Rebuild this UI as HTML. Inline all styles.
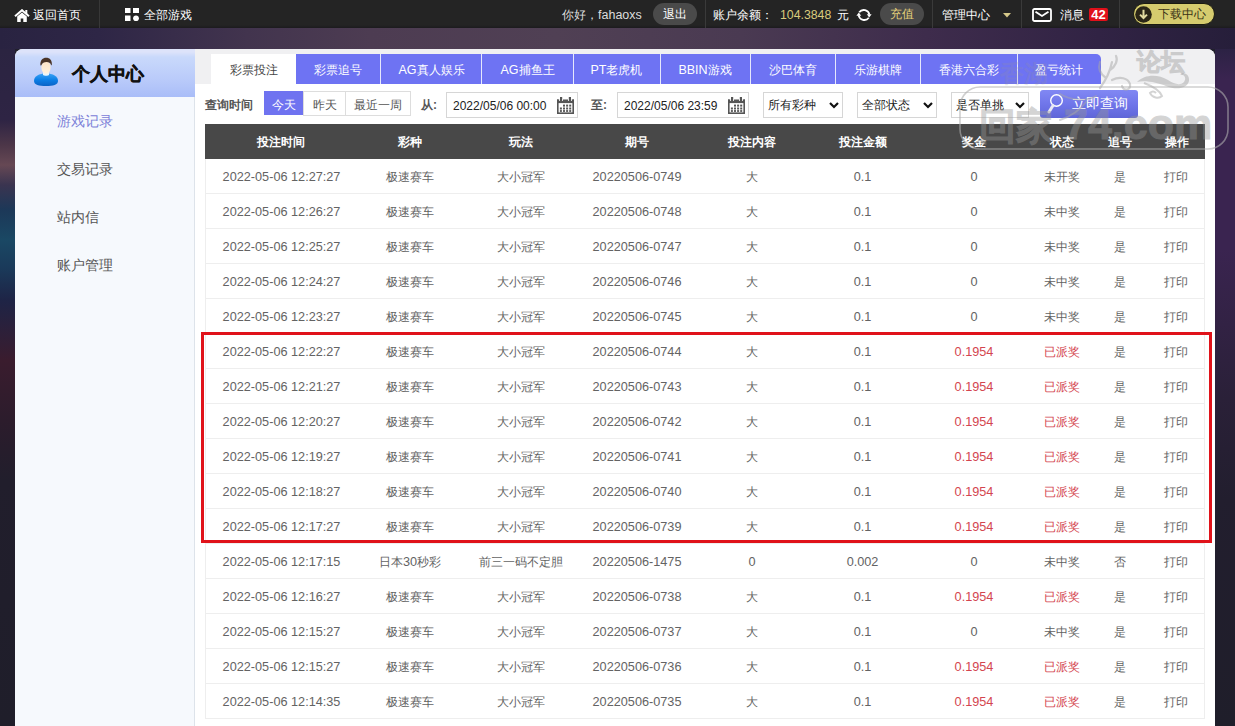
<!DOCTYPE html>
<html><head><meta charset="utf-8">
<style>
*{margin:0;padding:0;box-sizing:border-box}
html,body{width:1235px;height:726px;overflow:hidden}
body{font-family:"Liberation Sans",sans-serif;position:relative;background:#21202c}
.a{position:absolute}
svg{position:absolute;display:block}
.bgt{left:0;top:28px;width:1235px;height:21px;background:linear-gradient(90deg,#292341 0%,#2e2646 8%,#42344e 20%,#4d3c52 30%,#504054 45%,#4a3a52 60%,#3e2c4c 75%,#312344 89%,#261e3a 100%)}
.bgl{left:0;top:49px;width:15px;height:677px;background:linear-gradient(180deg,#2b2441 0px,#2e2444 71px,#4c3648 96px,#664854 116px,#3a3450 136px,#1c3858 161px,#1a4864 191px,#1a3a5a 219px,#1e2446 251px,#3a1c2e 311px,#2c1c2c 371px,#211e2c 431px,#1f1e2a 677px)}
.bgr{left:1215px;top:49px;width:20px;height:677px;background:linear-gradient(180deg,#2c2244 0px,#3a2450 30px,#3a2450 200px,#2a2038 350px,#221e2e 450px,#1f1e2a 677px)}
.top{left:0;top:0;width:1235px;height:28px;background:linear-gradient(180deg,#242424 0px,#242424 25px,#1c1b1e 28px);color:#fff;font-size:12px}
.t{position:absolute;top:1px;height:28px;line-height:28px;white-space:nowrap}
.sep{position:absolute;top:0;width:1px;height:28px;background:#3a3a3a}
.pill{position:absolute;top:3px;height:22px;border-radius:11px;background:#4a4a4a;text-align:center;line-height:22px;white-space:nowrap}
.panel{left:15px;top:49px;width:1200px;height:700px;background:#fff;border-radius:8px 8px 0 0}
.side{left:15px;top:97px;width:180px;height:629px;background:#f6f9fd;border-right:1px solid #dde3ea}
.sidehd{left:15px;top:49px;width:180px;height:48px;border-radius:8px 0 0 0;background:linear-gradient(180deg,#dde3fa 0px,#dde3fa 3px,#c9d9fb 8px,#bacbfa 30px,#a9bdf8 48px)}
.tt{left:72px;top:61px;font-size:18px;line-height:26px;font-weight:bold;color:#111;white-space:nowrap;-webkit-text-stroke:0.4px #111}
.menu{position:absolute;left:57px;font-size:14px;line-height:16px;color:#555;white-space:nowrap}
.tabs{left:195px;top:49px;width:1020px;height:35px;background:#f0f0f2;border-radius:0 8px 0 0}
.tab{position:absolute;top:54px;height:30px;line-height:30px;padding-top:1px;text-align:center;font-size:12px;color:#fff;background:#6e73f3;white-space:nowrap}
.tab.on{background:#fff;color:#444}
.tsep{position:absolute;top:54px;width:1px;height:30px;background:#e6e8fc}
.flt{position:absolute;font-size:12px;line-height:14px;color:#333;white-space:nowrap}
.btn3{position:absolute;top:91px;height:25px;line-height:23px;padding-top:2px;border:1px solid #ddd;text-align:center;font-size:12px;color:#555;background:#fff;white-space:nowrap}
.inp{position:absolute;top:92px;height:26px;border:1px solid #d6d6d6;background:#fff;font-size:12px;color:#222;line-height:24px;padding-left:6px;padding-top:1px;white-space:nowrap}
.sel{position:absolute;top:92px;width:80px;height:26px;border:1px solid #d6d6d6;background:#fff;font-size:12px;color:#222;line-height:24px;padding-left:4px;white-space:nowrap}
table{position:absolute;left:205px;top:124px;width:1000px;border-collapse:separate;border-spacing:0;font-size:12.2px;color:#636363;table-layout:fixed}
th{background:#484848;color:#fff;height:35px;padding-top:2px;font-weight:bold;font-size:12px}
td{height:35px;padding-top:2px;text-align:center;border-bottom:1px solid #eee;white-space:nowrap}
tbody tr td:first-child{border-left:1px solid #eee}
tbody tr td:last-child{border-right:1px solid #eee}
td.r{color:#d4454f}
.n{font-size:12.7px}
.redbox{position:absolute;left:201px;top:332px;width:1011px;height:211px;border:3px solid #e0121a}
</style></head><body>
<div class="a bgt"></div><div class="a bgl"></div><div class="a bgr"></div>
<div class="a top">
  <svg style="left:14px;top:8.5px" width="16" height="14" viewBox="0 0 16 14"><path d="M1 7.2 L8 1.2 L15 7.2" fill="none" stroke="#fff" stroke-width="2"/><rect x="11.3" y="1" width="2" height="4" fill="#fff"/><path d="M3.2 7.5 L8 3.4 L12.8 7.5 V13 H9.3 V9.6 H6.7 V13 H3.2 Z" fill="#fff"/></svg>
  <div class="t" style="left:33px">返回首页</div>
  <div class="sep" style="left:99px;background:#383838"></div>
  <svg style="left:125px;top:8px" width="14" height="13" viewBox="0 0 14 13"><rect x="0" y="0" width="5.5" height="5" fill="#fff"/><rect x="8" y="0" width="6" height="5" fill="#fff"/><rect x="0" y="7.5" width="5.5" height="5.5" fill="#fff"/><circle cx="11" cy="10.3" r="2.9" fill="#fff"/></svg>
  <div class="t" style="left:144px">全部游戏</div>
  <div class="t" style="left:562px;color:#ddd">你好，<span style="font-size:12.5px">fahaoxs</span></div>
  <div class="pill" style="left:653px;width:44px;color:#fff">退出</div>
  <div class="sep" style="left:705px"></div>
  <div class="t" style="left:713px">账户余额：</div>
  <div class="t" style="left:780px;color:#d9cb7c;font-size:12.3px">104.3848</div>
  <div class="t" style="left:837px">元</div>
  <svg style="left:856px;top:8px" width="16" height="14" viewBox="0 0 16 14"><path d="M3.2 4.2 A5.8 5.8 0 0 1 13.4 6.6" fill="none" stroke="#fff" stroke-width="1.8"/><path d="M10.8 6.2 L15.6 6.2 L13.2 9.6 Z" fill="#fff"/><path d="M12.8 9.8 A5.8 5.8 0 0 1 2.6 7.4" fill="none" stroke="#fff" stroke-width="1.8"/><path d="M0.4 7.8 L5.2 7.8 L2.8 4.4 Z" fill="#fff"/></svg>
  <div class="pill" style="left:880px;width:44px;color:#e6d27a">充值</div>
  <div class="sep" style="left:932px"></div>
  <div class="t" style="left:942px">管理中心</div>
  <svg style="left:1003px;top:13px" width="8" height="5" viewBox="0 0 8 5"><path d="M0 0 H8 L4 4.5 Z" fill="#d6c98a"/></svg>
  <div class="sep" style="left:1021px"></div>
  <svg style="left:1032px;top:8px" width="20" height="14" viewBox="0 0 20 14"><rect x="1" y="1" width="18" height="12" rx="1.5" fill="none" stroke="#fff" stroke-width="1.8"/><path d="M3.5 3.8 L10 8 L16.5 3.8" fill="none" stroke="#fff" stroke-width="1.8"/></svg>
  <div class="t" style="left:1060px">消息</div>
  <div class="a" style="left:1089px;top:8px;width:19px;height:13px;background:#e0101a;color:#fff;font-size:13px;font-weight:bold;line-height:13px;text-align:center;border-radius:2px">42</div>
  <div class="sep" style="left:1119px"></div>
  <div class="pill" style="left:1133px;width:82px;background:#d5cb6e;color:#3a3216;padding-left:15px;border:1px solid #1a1a10;line-height:21px">下载中心</div>
  <svg style="left:1135px;top:6px" width="17" height="17" viewBox="0 0 17 17"><circle cx="8.5" cy="8.5" r="8.3" fill="#2b2617"/><path d="M8.5 3.8 V11.5 M5 8.6 L8.5 12 L12 8.6" fill="none" stroke="#e3dba0" stroke-width="2"/></svg>
</div>
<div class="a panel"></div>
<div class="a sidehd"></div>
<svg style="left:33px;top:57px" width="26" height="30" viewBox="0 0 26 30">
  <defs><linearGradient id="bd" x1="0" y1="0" x2="0" y2="1"><stop offset="0" stop-color="#3aa2f5"/><stop offset="0.5" stop-color="#0c7fe6"/><stop offset="1" stop-color="#0a63c6"/></linearGradient>
  <linearGradient id="fc" x1="0" y1="0" x2="0" y2="1"><stop offset="0" stop-color="#fde3c4"/><stop offset="1" stop-color="#fff2de"/></linearGradient></defs>
  <path d="M1 24 C1 19 6 16.5 13 16.5 C20 16.5 25 19 25 24 C25 28 20 29 13 29 C6 29 1 28 1 24 Z" fill="url(#bd)"/>
  <path d="M10 14 H16 V18 C15 19 11 19 10 18 Z" fill="#e8f4fb"/>
  <ellipse cx="13" cy="10.5" rx="4.6" ry="6.3" fill="url(#fc)"/>
  <path d="M7.4 8.6 C7 3 10 0.8 13 0.8 C17 0.8 19.4 3.4 18.8 8.6 L18 7.8 C17.4 5.8 16 5.2 13.6 5 C11 5 9.2 6.2 8.4 8.2 Z" fill="#4a3426"/>
</svg>
<div class="a tt">个人中心</div>
<div class="a side"></div>
<div class="menu" style="top:113px;color:#7b80d8">游戏记录</div>
<div class="menu" style="top:161px">交易记录</div>
<div class="menu" style="top:209px">站内信</div>
<div class="menu" style="top:257px">账户管理</div>
<div class="a tabs"></div>
<div class="tab on" style="left:211px;width:85px">彩票投注</div>
<div class="tab" style="left:296px;width:805px;border-radius:0 5px 0 0"></div>
<div class="tab" style="left:296px;width:84px;background:none">彩票追号</div>
<div class="tab" style="left:381px;width:101px;background:none"><span class="n" style="font-size:12.5px">AG</span>真人娱乐</div>
<div class="tab" style="left:482px;width:91px;background:none"><span class="n" style="font-size:12.5px">AG</span>捕鱼王</div>
<div class="tab" style="left:573px;width:87px;background:none"><span class="n" style="font-size:12.5px">PT</span>老虎机</div>
<div class="tab" style="left:660px;width:90px;background:none"><span class="n" style="font-size:12.5px">BBIN</span>游戏</div>
<div class="tab" style="left:750px;width:85px;background:none">沙巴体育</div>
<div class="tab" style="left:835px;width:85px;background:none">乐游棋牌</div>
<div class="tab" style="left:920px;width:97px;background:none">香港六合彩</div>
<div class="tab" style="left:1017px;width:84px;background:none">盈亏统计</div>
<div class="tsep" style="left:380px"></div>
<div class="tsep" style="left:481px"></div>
<div class="tsep" style="left:573px"></div>
<div class="tsep" style="left:660px"></div>
<div class="tsep" style="left:750px"></div>
<div class="tsep" style="left:835px"></div>
<div class="tsep" style="left:920px"></div>
<div class="tsep" style="left:1017px"></div>

<div class="flt" style="left:205px;top:98px;font-weight:bold;color:#555">查询时间</div>
<div class="btn3" style="left:264px;width:40px;height:24px;background:#6f73f0;color:#fff;border-color:#6f73f0">今天</div>
<div class="btn3" style="left:303px;width:43px">昨天</div>
<div class="btn3" style="left:345px;width:66px">最近一周</div>
<div class="flt" style="left:421px;top:98px;font-weight:bold;color:#555">从:</div>
<div class="inp" style="left:446px;width:132px">2022/05/06 00:00</div>
<svg style="left:557px;top:97px" width="17" height="17" viewBox="0 0 17 17"><g fill="#555"><rect x="0" y="2.5" width="17" height="3.6"/><rect x="0" y="2.5" width="1.6" height="14.5"/><rect x="15.4" y="2.5" width="1.6" height="14.5"/><rect x="0" y="15.4" width="17" height="1.6"/><rect x="3" y="0" width="2.2" height="4"/><rect x="11.8" y="0" width="2.2" height="4"/>
<rect x="6" y="7.6" width="2" height="2"/><rect x="9.1" y="7.6" width="2" height="2"/><rect x="12.2" y="7.6" width="2" height="2"/>
<rect x="2.9" y="10.5" width="2" height="2"/><rect x="6" y="10.5" width="2" height="2"/><rect x="9.1" y="10.5" width="2" height="2"/><rect x="12.2" y="10.5" width="2" height="2"/>
<rect x="2.9" y="13.1" width="2" height="1.8"/><rect x="6" y="13.1" width="2" height="1.8"/><rect x="9.1" y="13.1" width="2" height="1.8"/><rect x="12.2" y="13.1" width="2" height="1.8"/></g><rect x="2.2" y="2" width="0.8" height="2" fill="#fff"/><rect x="5.2" y="2" width="0.8" height="2" fill="#fff"/><rect x="11" y="2" width="0.8" height="2" fill="#fff"/><rect x="14" y="2" width="0.8" height="2" fill="#fff"/></svg>
<div class="flt" style="left:591px;top:98px;font-weight:bold;color:#555">至:</div>
<div class="inp" style="left:617px;width:132px">2022/05/06 23:59</div>
<svg style="left:728px;top:97px" width="17" height="17" viewBox="0 0 17 17"><g fill="#555"><rect x="0" y="2.5" width="17" height="3.6"/><rect x="0" y="2.5" width="1.6" height="14.5"/><rect x="15.4" y="2.5" width="1.6" height="14.5"/><rect x="0" y="15.4" width="17" height="1.6"/><rect x="3" y="0" width="2.2" height="4"/><rect x="11.8" y="0" width="2.2" height="4"/>
<rect x="6" y="7.6" width="2" height="2"/><rect x="9.1" y="7.6" width="2" height="2"/><rect x="12.2" y="7.6" width="2" height="2"/>
<rect x="2.9" y="10.5" width="2" height="2"/><rect x="6" y="10.5" width="2" height="2"/><rect x="9.1" y="10.5" width="2" height="2"/><rect x="12.2" y="10.5" width="2" height="2"/>
<rect x="2.9" y="13.1" width="2" height="1.8"/><rect x="6" y="13.1" width="2" height="1.8"/><rect x="9.1" y="13.1" width="2" height="1.8"/><rect x="12.2" y="13.1" width="2" height="1.8"/></g><rect x="2.2" y="2" width="0.8" height="2" fill="#fff"/><rect x="5.2" y="2" width="0.8" height="2" fill="#fff"/><rect x="11" y="2" width="0.8" height="2" fill="#fff"/><rect x="14" y="2" width="0.8" height="2" fill="#fff"/></svg>
<div class="sel" style="left:763px">所有彩种</div>
<div class="sel" style="left:857px">全部状态</div>
<div class="sel" style="left:951px;width:78px">是否单挑</div>
<svg style="left:829px;top:102px" width="10" height="7" viewBox="0 0 10 7"><path d="M1 1 L5 5 L9 1" fill="none" stroke="#111" stroke-width="2.2"/></svg>
<svg style="left:923px;top:102px" width="10" height="7" viewBox="0 0 10 7"><path d="M1 1 L5 5 L9 1" fill="none" stroke="#111" stroke-width="2.2"/></svg>
<svg style="left:1015px;top:102px" width="10" height="7" viewBox="0 0 10 7"><path d="M1 1 L5 5 L9 1" fill="none" stroke="#111" stroke-width="2.2"/></svg>
<div class="a" style="left:1040px;top:90px;width:98px;height:28px;border-radius:3px;background:linear-gradient(180deg,#8188f3 0%,#7076ea 50%,#5f66d8 100%);color:#fff;font-size:13.5px;line-height:28px;padding-left:32px;white-space:nowrap">立即查询</div>
<svg style="left:1046px;top:93px" width="20" height="22" viewBox="0 0 20 22"><circle cx="10.5" cy="7.5" r="5.8" fill="none" stroke="#fff" stroke-width="1.4"/><path d="M7 12.5 L3 19" stroke="#e8e8f4" stroke-width="3" stroke-linecap="round"/></svg>

<table><thead><tr><th style="width:152px">投注时间</th><th style="width:106px">彩种</th><th style="width:116px">玩法</th><th style="width:116px">期号</th><th style="width:114px">投注内容</th><th style="width:107px">投注金额</th><th style="width:116px">奖金</th><th style="width:60px">状态</th><th style="width:56px">追号</th><th style="width:57px">操作</th></tr></thead><tbody>
<tr><td><span class="n">2022-05-06 12:27:27</span></td><td>极速赛车</td><td>大小冠军</td><td><span class="n">20220506-0749</span></td><td>大</td><td><span class="n">0.1</span></td><td><span class="n">0</span></td><td>未开奖</td><td>是</td><td>打印</td></tr>
<tr><td><span class="n">2022-05-06 12:26:27</span></td><td>极速赛车</td><td>大小冠军</td><td><span class="n">20220506-0748</span></td><td>大</td><td><span class="n">0.1</span></td><td><span class="n">0</span></td><td>未中奖</td><td>是</td><td>打印</td></tr>
<tr><td><span class="n">2022-05-06 12:25:27</span></td><td>极速赛车</td><td>大小冠军</td><td><span class="n">20220506-0747</span></td><td>大</td><td><span class="n">0.1</span></td><td><span class="n">0</span></td><td>未中奖</td><td>是</td><td>打印</td></tr>
<tr><td><span class="n">2022-05-06 12:24:27</span></td><td>极速赛车</td><td>大小冠军</td><td><span class="n">20220506-0746</span></td><td>大</td><td><span class="n">0.1</span></td><td><span class="n">0</span></td><td>未中奖</td><td>是</td><td>打印</td></tr>
<tr><td><span class="n">2022-05-06 12:23:27</span></td><td>极速赛车</td><td>大小冠军</td><td><span class="n">20220506-0745</span></td><td>大</td><td><span class="n">0.1</span></td><td><span class="n">0</span></td><td>未中奖</td><td>是</td><td>打印</td></tr>
<tr><td><span class="n">2022-05-06 12:22:27</span></td><td>极速赛车</td><td>大小冠军</td><td><span class="n">20220506-0744</span></td><td>大</td><td><span class="n">0.1</span></td><td class="r"><span class="n">0.1954</span></td><td class="r">已派奖</td><td>是</td><td>打印</td></tr>
<tr><td><span class="n">2022-05-06 12:21:27</span></td><td>极速赛车</td><td>大小冠军</td><td><span class="n">20220506-0743</span></td><td>大</td><td><span class="n">0.1</span></td><td class="r"><span class="n">0.1954</span></td><td class="r">已派奖</td><td>是</td><td>打印</td></tr>
<tr><td><span class="n">2022-05-06 12:20:27</span></td><td>极速赛车</td><td>大小冠军</td><td><span class="n">20220506-0742</span></td><td>大</td><td><span class="n">0.1</span></td><td class="r"><span class="n">0.1954</span></td><td class="r">已派奖</td><td>是</td><td>打印</td></tr>
<tr><td><span class="n">2022-05-06 12:19:27</span></td><td>极速赛车</td><td>大小冠军</td><td><span class="n">20220506-0741</span></td><td>大</td><td><span class="n">0.1</span></td><td class="r"><span class="n">0.1954</span></td><td class="r">已派奖</td><td>是</td><td>打印</td></tr>
<tr><td><span class="n">2022-05-06 12:18:27</span></td><td>极速赛车</td><td>大小冠军</td><td><span class="n">20220506-0740</span></td><td>大</td><td><span class="n">0.1</span></td><td class="r"><span class="n">0.1954</span></td><td class="r">已派奖</td><td>是</td><td>打印</td></tr>
<tr><td><span class="n">2022-05-06 12:17:27</span></td><td>极速赛车</td><td>大小冠军</td><td><span class="n">20220506-0739</span></td><td>大</td><td><span class="n">0.1</span></td><td class="r"><span class="n">0.1954</span></td><td class="r">已派奖</td><td>是</td><td>打印</td></tr>
<tr><td><span class="n">2022-05-06 12:17:15</span></td><td>日本<span class="n">30</span>秒彩</td><td>前三一码不定胆</td><td><span class="n">20220506-1475</span></td><td><span class="n">0</span></td><td><span class="n">0.002</span></td><td><span class="n">0</span></td><td>未中奖</td><td>否</td><td>打印</td></tr>
<tr><td><span class="n">2022-05-06 12:16:27</span></td><td>极速赛车</td><td>大小冠军</td><td><span class="n">20220506-0738</span></td><td>大</td><td><span class="n">0.1</span></td><td class="r"><span class="n">0.1954</span></td><td class="r">已派奖</td><td>是</td><td>打印</td></tr>
<tr><td><span class="n">2022-05-06 12:15:27</span></td><td>极速赛车</td><td>大小冠军</td><td><span class="n">20220506-0737</span></td><td>大</td><td><span class="n">0.1</span></td><td><span class="n">0</span></td><td>未中奖</td><td>是</td><td>打印</td></tr>
<tr><td><span class="n">2022-05-06 12:15:27</span></td><td>极速赛车</td><td>大小冠军</td><td><span class="n">20220506-0736</span></td><td>大</td><td><span class="n">0.1</span></td><td class="r"><span class="n">0.1954</span></td><td class="r">已派奖</td><td>是</td><td>打印</td></tr>
<tr><td><span class="n">2022-05-06 12:14:35</span></td><td>极速赛车</td><td>大小冠军</td><td><span class="n">20220506-0735</span></td><td>大</td><td><span class="n">0.1</span></td><td class="r"><span class="n">0.1954</span></td><td class="r">已派奖</td><td>是</td><td>打印</td></tr>

</tbody></table>
<div class="redbox"></div>
<svg style="left:940px;top:36px" width="295" height="124" viewBox="0 0 295 124">
<g fill="none" stroke="rgba(175,175,175,0.6)" stroke-width="1.6"><rect x="20" y="51" width="268" height="62" rx="20"/></g>
<g style="font-family:'Liberation Sans',sans-serif;font-weight:700" fill="#969696" stroke="#969696" stroke-width="1" opacity="0.4">
<text x="39" y="103" style="font-size:37px">回家</text>
<text x="124" y="103" style="font-size:43px">74.com</text>
<text x="197" y="34" style="font-size:24px">论坛</text>
<text x="60" y="46" style="font-size:24px" opacity="0.5" stroke-width="0">香湖</text>
</g>
<g opacity="0.5">
<path d="M197 46 C205 38 218 38 228 44 C234 48 240 50 244 46 C247 42 244 38 240 39 C243 35 250 38 249 45 C247 53 236 54 226 50 C218 47 206 44 197 46 Z" fill="#a8a8a8"/>
<path d="M204 47 C212 50 220 55 222 60 C219 63 212 62 210 57 C212 55 214 55 216 57" fill="none" stroke="#a8a8a8" stroke-width="2"/>
<path d="M160 52 C166 44 170 36 172 26 M166 42 C160 38 158 32 160 26 M170 34 C176 30 178 24 176 20 M172 44 C180 40 188 42 190 48 C191 54 184 56 182 50" fill="none" stroke="#a8a8a8" stroke-width="2.2" stroke-linecap="round"/>
<path d="M120 58 C130 64 146 66 156 60 M146 66 C140 74 132 80 120 84" fill="none" stroke="#a8a8a8" stroke-width="2" stroke-linecap="round"/>
</g>
</svg>
</body></html>
